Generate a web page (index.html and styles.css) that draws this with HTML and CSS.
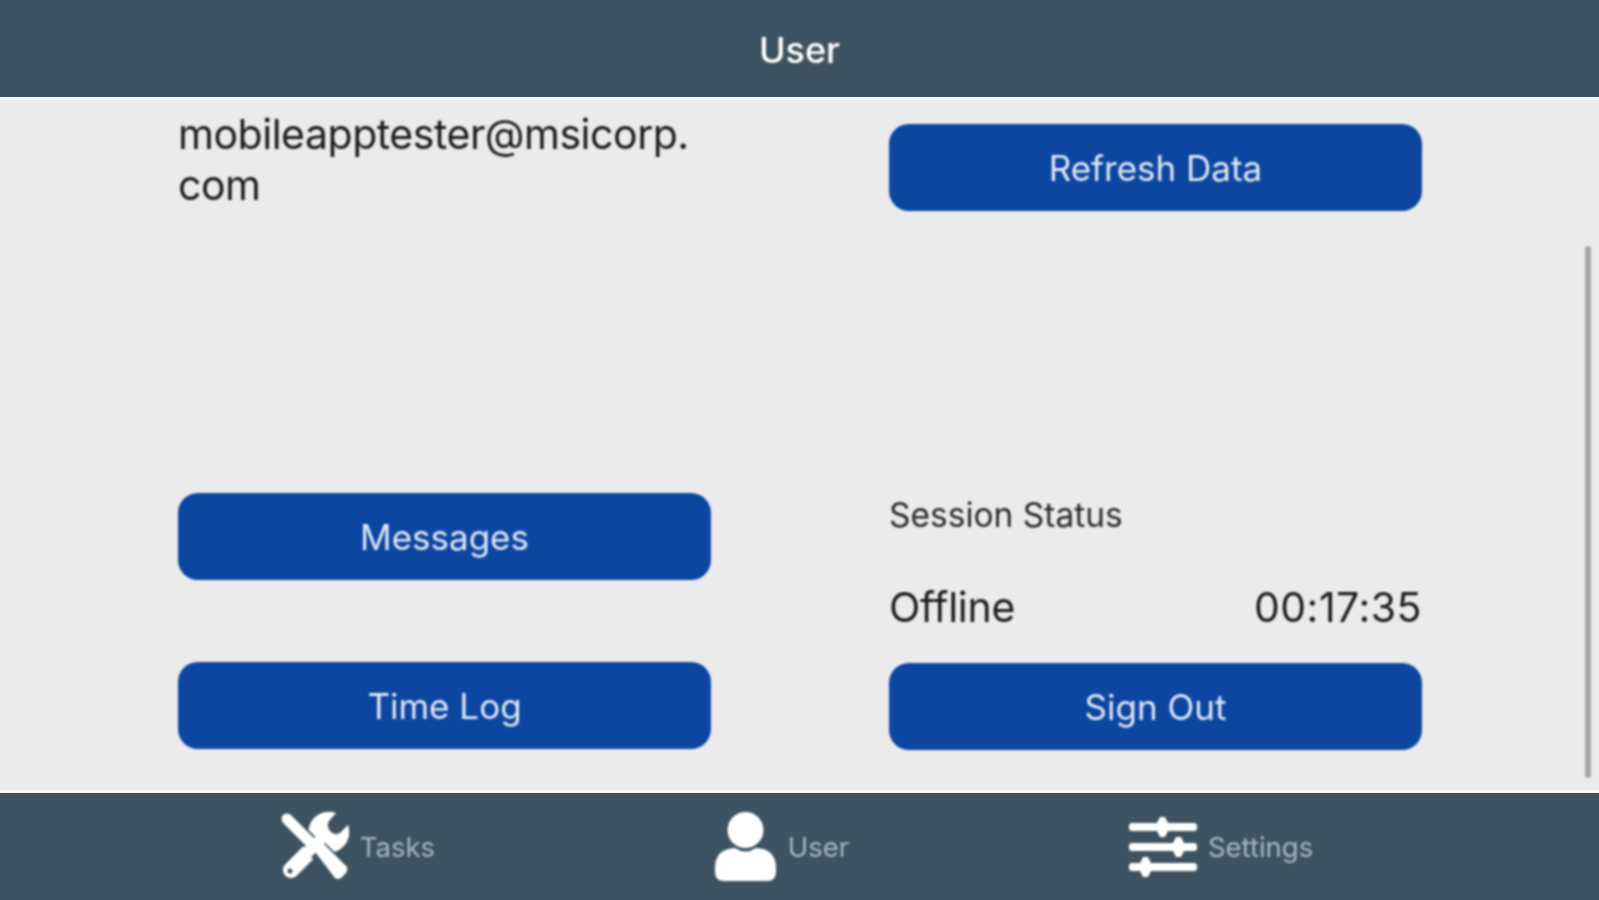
FILE: index.html
```html
<!DOCTYPE html>
<html lang="en">

<head>
    <meta charset="UTF-8">
    <title>User</title>
    <link rel="stylesheet" href="styles.css">
</head>

<body>
    <header class="top-bar"><span class="top-title">User</span></header>

    <main class="content">
        <div class="column">
            <div class="email">mobileapptester@msicorp.<br>com</div>
            <button class="action-btn messages-btn">Messages</button>
            <button class="action-btn timelog-btn">Time Log</button>
        </div>
        <div class="column">
            <button class="action-btn refresh-btn">Refresh Data</button>
            <div class="session-label">Session Status</div>
            <div class="session-row">
                <span class="session-state">Offline</span>
                <span class="session-time">00:17:35</span>
            </div>
            <button class="action-btn signout-btn">Sign Out</button>
        </div>
        <div class="scroll-thumb"></div>
    </main>

    <nav class="tab-bar">
        <a class="tab">
            <svg class="tab-icon" width="69" height="69" viewBox="0 0 69 69">
                <!-- wrench -->
                <path d="M11 58 L34 35" stroke="#fff" stroke-width="16" stroke-linecap="round" fill="none" />
                <path d="M56 1 A20.500 20.500 0 1 0 68 13 L60 21 Q54 24 50 19 Q46 14 49 9 Z" fill="#fff" />
                <circle cx="10" cy="59" r="2.500" fill="#3e5361" />
                <!-- screwdriver -->
                <path d="M7 7 L30 30" stroke="#3e5361" stroke-width="15" fill="none" />
                <path d="M38 38 L60 59" stroke="#3e5361" stroke-width="20" fill="none" />
                <path d="M7 7 L32 32" stroke="#fff" stroke-width="11" stroke-linecap="round" fill="none" />
                <path d="M32 36 L40 28 L67 55 Q68 58 66 61 L61 66 Q58 68 55 66 Z" fill="#fff" />
            </svg>
            <span>Tasks</span>
        </a>
        <a class="tab">
            <svg class="tab-icon" width="62" height="69" viewBox="0 0 62 69">
                <circle cx="30.500" cy="18" r="18" fill="#fff" />
                <path d="M0 60 V56 Q0 37 20 36 Q30.500 43 41 36 Q61 37 61 56 V60 Q61 69 52 69 H9 Q0 69 0 60 Z" fill="#fff" />
            </svg>
            <span>User</span>
        </a>
        <a class="tab">
            <svg class="tab-icon" width="68" height="69" viewBox="0 0 68 69">
                <g fill="#fff">
                    <rect x="0" y="11" width="68" height="8" rx="3" />
                    <rect x="0" y="31" width="68" height="8" rx="3" />
                    <rect x="0" y="51" width="68" height="8" rx="3" />
                    <path d="M31 5 H36 L39 11 V19 L36 25 H31 L28 19 V11 Z" />
                    <path d="M47 25 H52 L55 31 V39 L52 45 H47 L44 39 V31 Z" />
                    <path d="M14 45 H19 L22 51 V59 L19 65 H14 L11 59 V51 Z" />
                </g>
            </svg>
            <span>Settings</span>
        </a>
    </nav>
</body>

</html>
```

FILE: styles.css
```css
html,
body {
    margin: 0;
    height: 100%;
}

body {
    display: flex;
    flex-direction: column;
    height: 900px;
    overflow: hidden;
    background-color: #ebebeb;
    font-family: Inter, "Liberation Sans", sans-serif;
    color: #1c1c1c;
}

/* the source picture is a soft upscale */
.top-title,
.column,
.scroll-thumb,
.tab {
    filter: blur(0.8px);
}

.top-bar {
    height: 97px;
    line-height: 100px;
    flex-shrink: 0;
    text-align: center;
    background-color: #3e5361;
    color: #fff;
    font-size: 36px;
    font-weight: 500;
}

.top-title {
    display: inline-block;
}

.content {
    flex: 1;
    position: relative;
    display: flex;
    gap: 178px;
    padding: 0 177px 0 178px;
    border-top: 3px solid #f7f6f4;
    border-bottom: 3px solid #f7f6f4;
}

.column {
    width: 533px;
    display: flex;
    flex-direction: column;
    box-sizing: border-box;
}

.email {
    margin-top: 9px;
    font-size: 41px;
    letter-spacing: -0.47px;
    line-height: 51px;
    height: 384px;
}

.action-btn {
    width: 100%;
    height: 87px;
    flex-shrink: 0;
    border: none;
    border-radius: 20px;
    background-color: #0d46a0;
    color: #dfe8f6;
    font-family: inherit;
    font-size: 35px;
    padding: 0;
}

.timelog-btn {
    margin-top: 82px;
}

.refresh-btn {
    margin-top: 24px;
}

.session-label {
    margin-top: 284px;
    font-size: 33.500px;
    line-height: 40px;
    color: #2b2b2b;
}

.session-row {
    margin-top: 48px;
    display: flex;
    justify-content: space-between;
    font-size: 41px;
    line-height: 48px;
}

.session-state {
    letter-spacing: -0.3px;
}

.session-time {
    letter-spacing: 0.5px;
}

.signout-btn {
    margin-top: 32px;
}

.scroll-thumb {
    position: absolute;
    top: 146px;
    right: 8px;
    width: 6px;
    height: 532px;
    border-radius: 3px;
    background-color: #a6a6a6;
}

.tab-bar {
    height: 107px;
    flex-shrink: 0;
    display: flex;
    justify-content: space-evenly;
    align-items: center;
    padding-right: 6px;
    background-color: #3e5361;
}

.tab {
    display: flex;
    align-items: center;
    gap: 11px;
    color: #a9b7c1;
    font-size: 27.500px;
}

.tab-icon {
    display: block;
}
```
